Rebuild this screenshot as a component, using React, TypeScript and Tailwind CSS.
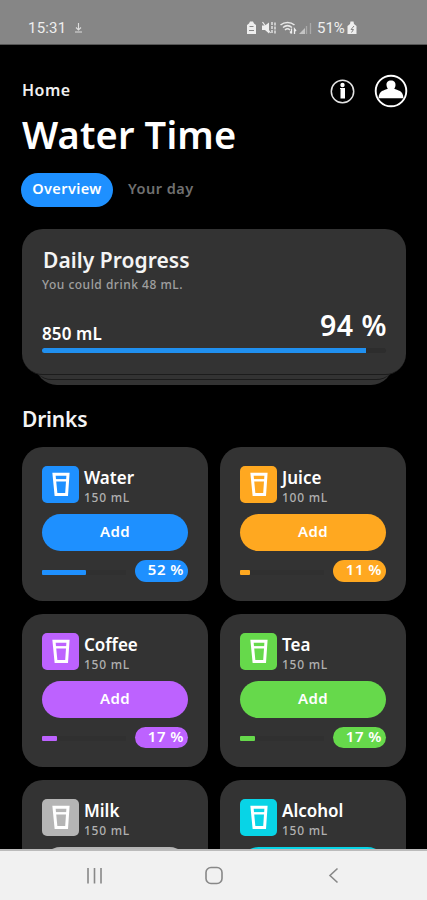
import clsx from "clsx";

type Drink = {
  name: string;
  amount: string;
  color: string;
  percent?: string;
  fill?: number;
};

const drinks: Drink[] = [
  { name: "Water", amount: "150 mL", percent: "52 %", fill: 44, color: "bg-[#1e90ff]" },
  { name: "Juice", amount: "100 mL", percent: "11 %", fill: 10, color: "bg-[#ffa820]" },
  { name: "Coffee", amount: "150 mL", percent: "17 %", fill: 15, color: "bg-[#bd62ff]" },
  { name: "Tea", amount: "150 mL", percent: "17 %", fill: 15, color: "bg-[#66d94b]" },
  { name: "Milk", amount: "150 mL", color: "bg-[#b5b5b5]" },
  { name: "Alcohol", amount: "150 mL", color: "bg-[#08d4e6]" },
];

const StatusBar = () => (
  <div className="flex h-[45px] shrink-0 items-start border-b border-[#555] bg-[#868686] pt-[18px] font-['Roboto'] text-[#eee]">
    <span className="ml-[28px] w-[38px] text-[15px] leading-[20px] tracking-[0.2px]">15:31</span>
    <svg className="mt-[5px] ml-[8px] h-[10px] w-[9px]" viewBox="0 0 9 10" fill="none" stroke="#ddd" strokeWidth="1.1">
      <path d="M4.500 0v7M2 4.500l2.500 2.500L7 4.500M1 9h7" />
    </svg>
    {/* battery saver, mute, wifi, signal */}
    <svg className="mt-[3px] ml-[163px] h-[14px] w-[67px]" viewBox="0 0 67 14">
      <path d="M1 4l2-1.500L4 .5h3L8 2.500 10 4v9H1z" fill="#eee" />
      <path d="M3.500 5.500h4M3 9.500h5" stroke="#868686" strokeWidth="1.200" />
      <path d="M16 4.500h3l4-3v11l-4-3.500h-3z" fill="#eee" />
      <path d="M16.500 1l8 11" stroke="#eee" strokeWidth="1.200" />
      <path d="M26 1v12M29 1.500v11" stroke="#eee" strokeWidth="1.300" strokeDasharray="3 1" />
      <path d="M34.500 4c4-3.500 10-3.500 14 0M37 6.500c3-2.500 6-2.500 9 0M39 9c1.500-1.400 3.500-1.400 5 0" fill="none" stroke="#e8e8e8" strokeWidth="1.500" />
      <path d="M45.500 7.500v5M44 10.500l1.500 2M48.500 13V8l1.500 2" fill="none" stroke="#eee" strokeWidth="1.300" />
      <path d="M53 13l6-6v6z" fill="#c4c4c4" />
      <path d="M60.500 13V5M64.500 13V2" stroke="#aaa" strokeWidth="1.300" />
    </svg>
    <span className="ml-[4px] w-[30px] text-[15px] leading-[20px] whitespace-nowrap">51%</span>
    <svg className="mt-[3px] h-[14px] w-[10px]" viewBox="0 0 10 14">
      <path d="M.5 5L3 3l.5-2.500h3L7 3l2.500 2v8H.5z" fill="#eee" />
      <path d="M7 5L4 8.500h2.500l-2 3" fill="none" stroke="#868686" />
    </svg>
  </div>
);

const InfoIcon = () => (
  <svg className="size-[25px]" viewBox="0 0 25 25">
    <circle cx="12.500" cy="12.500" r="11.200" fill="none" stroke="#e4e4e4" strokeWidth="1.500" />
    <circle cx="12.500" cy="6" r="2.200" fill="#fff" />
    <path d="M10 9h5v10.500h-4.500V10H10z" fill="#fff" />
  </svg>
);

const UserIcon = () => (
  <svg className="size-[34px]" viewBox="0 0 34 34">
    <circle cx="17" cy="17" r="15.300" fill="none" stroke="#fff" strokeWidth="1.900" />
    <path
      d="M17 6.500c3 0 4.800 2 4.500 4.800-.1 1.400-.5 2.400-1.300 3.400 1.500.8 4 1.300 5.800 2.300 2.200 1.300 3.200 3.800 3.500 7.200h-25c.3-3.400 1.300-5.900 3.500-7.200 1.800-1 4.300-1.500 5.800-2.300-.8-1-1.200-2-1.300-3.400C12.200 8.500 14 6.500 17 6.500z"
      fill="#fff"
    />
  </svg>
);

const CupIcon = () => (
  <svg className="h-[25px] w-[18px]" viewBox="0 0 18 25" fill="none" stroke="#fff" strokeWidth="3">
    <path d="M2 2.200h14l-1.400 20.400H4z" />
    <path d="M3 8.300h12" strokeWidth="2.400" />
  </svg>
);

const DrinkCard = ({ drink }: { drink: Drink }) => (
  <div className="h-[153.500px] rounded-[21px] bg-[#333] px-5 pt-[19px]">
    <div className="flex gap-[5px]">
      <div className={clsx("flex size-[37px] shrink-0 items-center justify-center rounded-[5px]", drink.color)}>
        <CupIcon />
      </div>
      <div className="whitespace-nowrap">
        <h3 className="text-[17px] leading-[23px] font-semibold text-white">{drink.name}</h3>
        <p className="text-[12px] leading-[17px] font-medium tracking-[0.75px] text-[#b0b0b0]">{drink.amount}</p>
      </div>
    </div>
    <button
      className={clsx(
        "mt-[8px] flex h-[37px] w-full justify-center rounded-full pt-[6px] text-[15px] leading-[22px] font-semibold tracking-[0.4px] text-white",
        drink.color
      )}
    >
      {drink.percent && "Add"}
    </button>
    {drink.percent && (
      <div className="mt-[9px] flex items-center justify-between">
        <div className="mt-[3px] h-[5px] w-[84px] bg-[#303030]">
          <div className={clsx("h-full rounded-[1px]", drink.color)} style={{ width: drink.fill }} />
        </div>
        <span
          className={clsx(
            "flex h-[21.500px] w-[53px] justify-end rounded-full pr-[4px] text-[15px] leading-[19px] font-semibold tracking-[0.5px] whitespace-nowrap text-white",
            drink.color
          )}
        >
          {drink.percent}
        </span>
      </div>
    )}
  </div>
);

const ProgressCard = () => (
  <div>
    <div className="relative z-20 h-[146px] rounded-[21px] border-b border-[#1c1c1c] bg-[#333] px-5 pt-[17px]">
      <h2 className="ml-px text-[21px] leading-[29px] font-semibold tracking-[0.05px] text-[#f4f4f4]">Daily Progress</h2>
      <p className="mt-px text-[12px] leading-[17px] font-medium tracking-[0.5px] text-[#a0a0a0]">You could drink 48 mL.</p>
      <div className="mt-[15px] flex h-[37px] items-end justify-between text-white">
        <span className="text-[17px] leading-[22px] font-semibold tracking-[0.1px]">850 mL</span>
        <span className="-mr-px pb-px text-[28.500px] leading-[38px] font-semibold tracking-[0.5px]">94 %</span>
      </div>
      <div className="mt-[3px] h-[5px] rounded-full bg-[#2d2d2d]">
        <div className="h-full w-[324px] rounded-l-full bg-[#2090f0]" />
      </div>
    </div>
    {/* edges of the cards stacked underneath */}
    <div className="relative z-10 mx-[9px] -mt-[21px] h-[26px] rounded-b-[21px] border-b border-[#1c1c1c] bg-[#333]" />
    <div className="mx-[13px] -mt-[20px] h-[25px] rounded-b-[22px] bg-[#333]" />
  </div>
);

const NavigationBar = () => (
  <div className="flex h-[51px] shrink-0 items-center border-t-2 border-[#bbb] bg-[#f1f1f1]">
    <svg className="ml-[86px] h-[16px] w-[17px]" viewBox="0 0 17 16" stroke="#888" strokeWidth="1.600">
      <path d="M2 0v15.500M8.500 0v15.500M15 0v15.500" />
    </svg>
    <svg className="ml-[101px] h-[19px] w-[20px]" viewBox="0 0 20 19" fill="none" stroke="#888" strokeWidth="1.600">
      <rect x="2" y="1.500" width="16" height="16" rx="5" />
    </svg>
    <svg className="ml-[104px] h-[17px] w-[11px]" viewBox="0 0 11 17" fill="none" stroke="#888" strokeWidth="1.600">
      <path d="M9.500 1.500L2 8.500l7.500 7" />
    </svg>
  </div>
);

export default function App() {
  return (
    <div className="flex h-[900px] w-[427px] flex-col overflow-hidden bg-black font-['Noto_Sans',sans-serif]">
      <StatusBar />
      <main className="min-h-0 flex-1 overflow-hidden pr-[21px] pl-[22px]">
        <div className="flex h-[66px] items-center justify-between pt-[26px]">
          <span className="pb-[2px] text-[16px] leading-[22px] font-semibold tracking-[0.5px] text-[#f0f0f0]">Home</span>
          <div className="-mr-[2px] flex items-center gap-[19px]">
            <InfoIcon />
            <UserIcon />
          </div>
        </div>
        <h1 className="-mt-px text-[38px] leading-[48px] font-semibold tracking-[0.15px] text-white">Water Time</h1>
        <div className="-ml-px mt-[15px] flex items-start text-[14.500px] leading-[31px]">
          <button className="h-[34px] w-[92px] rounded-full bg-[#1e90ff] pb-[3px] font-semibold tracking-[0.4px] text-white">
            Overview
          </button>
          <button className="ml-[15px] font-semibold tracking-[0.5px] text-[#707070]">Your day</button>
        </div>
        <div className="mt-[22px]">
          <ProgressCard />
        </div>
        <h2 className="mt-[19px] text-[21px] leading-[30px] font-semibold tracking-[-0.2px] text-[#f4f4f4]">Drinks</h2>
        <div className="mt-[13px] grid grid-cols-2 gap-x-[12px] gap-y-[13px]">
          {drinks.map((drink) => (
            <DrinkCard key={drink.name} drink={drink} />
          ))}
        </div>
      </main>
      <NavigationBar />
    </div>
  );
}
